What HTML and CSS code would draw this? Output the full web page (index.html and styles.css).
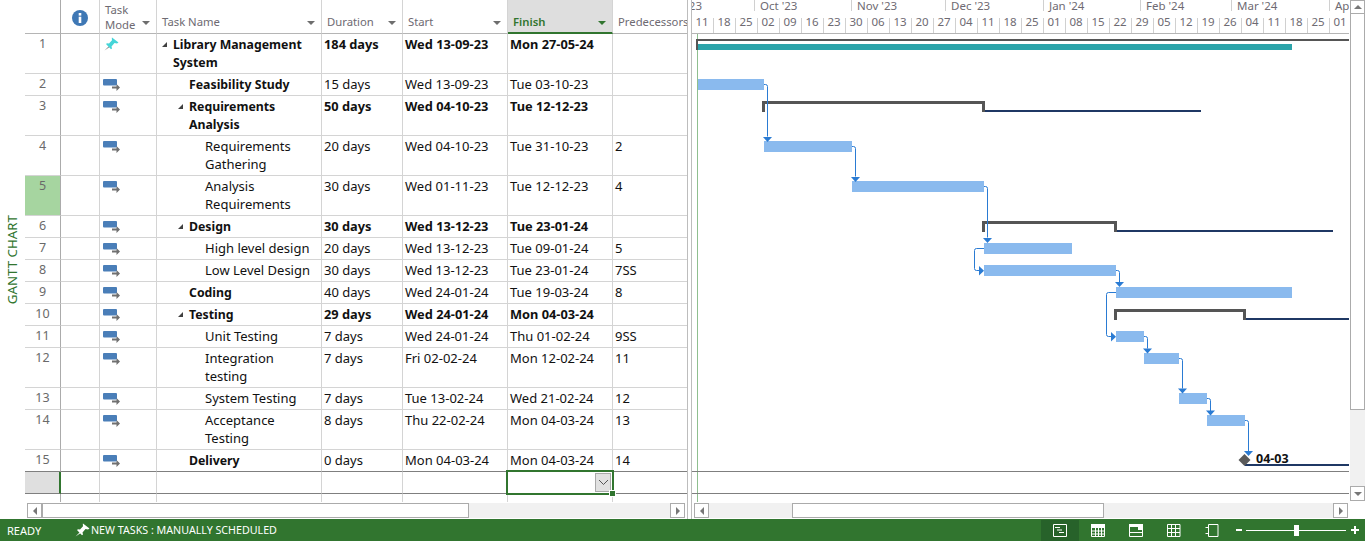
FILE: index.html
```html
<!DOCTYPE html>
<html>
<head>
	<meta charset="utf-8">
	<title>Library Management System - Gantt Chart</title>
	<link rel="stylesheet" href="styles.css">
</head>
<body>
<svg class="defs" width="0" height="0">
	<symbol id="auto" viewBox="0 0 17 12">
		<rect class="auto-bar" x="0" y="0" width="14" height="6.5" rx="1"/>
		<path class="auto-arrow" d="M9 7.5h4.500v-2.500l3.500 3.500-3.500 3.500v-2.500h-4.500z"/>
	</symbol>
	<symbol id="pin" viewBox="0 0 15 14">
		<path class="pin-needle" d="M0.500 13.500l5-5 1 1z"/>
		<path class="pin-head" d="M8 0.500l6.500 5-1.500 1-2.500-.5-3 3.500.5 2-1 .8-5-5.300 1-.8 2 .3 3-3.300-.2-2.200z"/>
	</symbol>
</svg>
<div class="views">
	<div class="sidebar"><span>GANTT CHART</span></div>
	<div class="pane-table">
		<table class="grid">
			<colgroup>
				<col class="c-id"><col class="c-info"><col class="c-mode"><col class="c-name"><col class="c-dur"><col class="c-date"><col class="c-date"><col class="c-pred">
			</colgroup>
			<tr class="head">
				<th></th>
				<th class="info-head">
					<svg width="16" height="16" viewBox="0 0 16 16"><circle class="info-disc" cx="8" cy="8" r="8"/><rect class="info-mark" x="6.700" y="3" width="2.600" height="2.600"/><rect class="info-mark" x="6.700" y="6.700" width="2.600" height="6.300"/></svg>
				</th>
				<th><div class="th-in th-two"><span>Task<br>Mode</span><i class="sort"></i></div></th>
				<th><div class="th-in"><span>Task Name</span><i class="sort"></i></div></th>
				<th><div class="th-in"><span>Duration</span><i class="sort"></i></div></th>
				<th><div class="th-in"><span>Start</span><i class="sort"></i></div></th>
				<th class="th-active"><div class="th-in"><span>Finish</span><i class="sort"></i></div></th>
				<th><div class="th-in"><span>Predecessors</span></div></th>
			</tr>
			<tr class="tall bold">
				<td class="id">1</td><td></td>
				<td><svg class="mode pin-icon"><use href="#pin"/></svg></td>
				<td class="name l0"><i class="twist"></i>Library Management System</td>
				<td>184 days</td><td>Wed 13-09-23</td><td>Mon 27-05-24</td><td></td>
			</tr>
			<tr class="bold-name">
				<td class="id">2</td><td></td>
				<td><svg class="mode"><use href="#auto"/></svg></td>
				<td class="name l1">Feasibility Study</td>
				<td>15 days</td><td>Wed 13-09-23</td><td>Tue 03-10-23</td><td></td>
			</tr>
			<tr class="tall bold">
				<td class="id">3</td><td></td>
				<td><svg class="mode"><use href="#auto"/></svg></td>
				<td class="name l1"><i class="twist"></i>Requirements Analysis</td>
				<td>50 days</td><td>Wed 04-10-23</td><td>Tue 12-12-23</td><td></td>
			</tr>
			<tr class="tall">
				<td class="id">4</td><td></td>
				<td><svg class="mode"><use href="#auto"/></svg></td>
				<td class="name l2">Requirements Gathering</td>
				<td>20 days</td><td>Wed 04-10-23</td><td>Tue 31-10-23</td><td>2</td>
			</tr>
			<tr class="tall">
				<td class="id id-on">5</td><td></td>
				<td><svg class="mode"><use href="#auto"/></svg></td>
				<td class="name l2">Analysis Requirements</td>
				<td>30 days</td><td>Wed 01-11-23</td><td>Tue 12-12-23</td><td>4</td>
			</tr>
			<tr class="bold">
				<td class="id">6</td><td></td>
				<td><svg class="mode"><use href="#auto"/></svg></td>
				<td class="name l1"><i class="twist"></i>Design</td>
				<td>30 days</td><td>Wed 13-12-23</td><td>Tue 23-01-24</td><td></td>
			</tr>
			<tr>
				<td class="id">7</td><td></td>
				<td><svg class="mode"><use href="#auto"/></svg></td>
				<td class="name l2">High level design</td>
				<td>20 days</td><td>Wed 13-12-23</td><td>Tue 09-01-24</td><td>5</td>
			</tr>
			<tr>
				<td class="id">8</td><td></td>
				<td><svg class="mode"><use href="#auto"/></svg></td>
				<td class="name l2">Low Level Design</td>
				<td>30 days</td><td>Wed 13-12-23</td><td>Tue 23-01-24</td><td>7SS</td>
			</tr>
			<tr class="bold-name">
				<td class="id">9</td><td></td>
				<td><svg class="mode"><use href="#auto"/></svg></td>
				<td class="name l1">Coding</td>
				<td>40 days</td><td>Wed 24-01-24</td><td>Tue 19-03-24</td><td>8</td>
			</tr>
			<tr class="bold">
				<td class="id">10</td><td></td>
				<td><svg class="mode"><use href="#auto"/></svg></td>
				<td class="name l1"><i class="twist"></i>Testing</td>
				<td>29 days</td><td>Wed 24-01-24</td><td>Mon 04-03-24</td><td></td>
			</tr>
			<tr>
				<td class="id">11</td><td></td>
				<td><svg class="mode"><use href="#auto"/></svg></td>
				<td class="name l2">Unit Testing</td>
				<td>7 days</td><td>Wed 24-01-24</td><td>Thu 01-02-24</td><td>9SS</td>
			</tr>
			<tr class="tall">
				<td class="id">12</td><td></td>
				<td><svg class="mode"><use href="#auto"/></svg></td>
				<td class="name l2">Integration testing</td>
				<td>7 days</td><td>Fri 02-02-24</td><td>Mon 12-02-24</td><td>11</td>
			</tr>
			<tr>
				<td class="id">13</td><td></td>
				<td><svg class="mode"><use href="#auto"/></svg></td>
				<td class="name l2">System Testing</td>
				<td>7 days</td><td>Tue 13-02-24</td><td>Wed 21-02-24</td><td>12</td>
			</tr>
			<tr class="tall">
				<td class="id">14</td><td></td>
				<td><svg class="mode"><use href="#auto"/></svg></td>
				<td class="name l2">Acceptance Testing</td>
				<td>8 days</td><td>Thu 22-02-24</td><td>Mon 04-03-24</td><td>13</td>
			</tr>
			<tr class="bold-name dark-line">
				<td class="id">15</td><td></td>
				<td><svg class="mode"><use href="#auto"/></svg></td>
				<td class="name l1">Delivery</td>
				<td>0 days</td><td>Mon 04-03-24</td><td>Mon 04-03-24</td><td>14</td>
			</tr>
			<tr class="dark-line blank">
				<td class="id id-blank"></td><td></td><td></td><td></td><td></td><td></td>
				<td class="selected">
					<div class="sel-box">
						<button class="sel-drop"><svg width="11" height="7" viewBox="0 0 11 7"><path class="chevron" d="M1 1l4.500 4.500 4.500-4.500"/></svg></button>
						<i class="sel-handle"></i>
					</div>
				</td>
				<td></td>
			</tr>
			<tr class="tail">
				<td></td><td></td><td></td><td></td><td></td><td></td><td></td><td></td>
			</tr>
		</table>
		<div class="hscroll">
			<button class="sb-btn"><i class="tri-left"></i></button>
			<div class="sb-thumb thumb-table"></div>
			<div class="sb-track"></div>
			<button class="sb-btn"><i class="tri-right"></i></button>
		</div>
	</div>
	<div class="splitter"></div>
	<div class="pane-chart">
		<svg class="chart" width="657" height="502" viewBox="692 0 657 502">
			<!-- timescale -->
			<g class="tick">
				<path d="M754.500 0v11M851.500 0v11M945.500 0v11M1043.500 0v11M1140.500 0v11M1231.500 0v11M1329.500 0v11"/>
				<path d="M713.500 18v15M735.500 18v15M757.500 18v15M779.500 18v15M801.500 18v15M823.500 18v15M845.500 18v15M867.500 18v15M889.500 18v15M911.500 18v15M933.500 18v15M955.500 18v15M977.500 18v15M999.500 18v15M1021.500 18v15M1043.500 18v15M1065.500 18v15M1087.500 18v15M1109.500 18v15M1131.500 18v15M1153.500 18v15M1175.500 18v15M1197.500 18v15M1219.500 18v15M1241.500 18v15M1263.500 18v15M1285.500 18v15M1307.500 18v15M1329.500 18v15"/>
			</g>
			<rect class="scale-line" x="692" y="33" width="657" height="1"/>
			<g class="month">
				<text x="702" y="10" text-anchor="end">Sep '23</text>
				<text x="760" y="10">Oct '23</text>
				<text x="857" y="10">Nov '23</text>
				<text x="951" y="10">Dec '23</text>
				<text x="1049" y="10">Jan '24</text>
				<text x="1146" y="10">Feb '24</text>
				<text x="1237" y="10">Mar '24</text>
				<text x="1335" y="10">Apr '24</text>
			</g>
			<g class="week">
				<text x="702" y="26">11</text><text x="724" y="26">18</text><text x="746" y="26">25</text>
				<text x="768" y="26">02</text><text x="790" y="26">09</text><text x="812" y="26">16</text><text x="834" y="26">23</text><text x="856" y="26">30</text>
				<text x="878" y="26">06</text><text x="900" y="26">13</text><text x="922" y="26">20</text><text x="944" y="26">27</text>
				<text x="966" y="26">04</text><text x="988" y="26">11</text><text x="1010" y="26">18</text><text x="1032" y="26">25</text>
				<text x="1054" y="26">01</text><text x="1076" y="26">08</text><text x="1098" y="26">15</text><text x="1120" y="26">22</text><text x="1142" y="26">29</text>
				<text x="1164" y="26">05</text><text x="1186" y="26">12</text><text x="1208" y="26">19</text><text x="1230" y="26">26</text>
				<text x="1252" y="26">04</text><text x="1274" y="26">11</text><text x="1296" y="26">18</text><text x="1318" y="26">25</text>
				<text x="1340" y="26">01</text>
			</g>

			<rect class="today" x="697" y="34" width="1" height="468"/>
			<rect class="row-rule" x="692" y="471" width="657" height="1"/>
			<rect class="row-rule" x="692" y="493" width="657" height="1"/>

			<!-- project summary -->
			<rect class="summary" x="696" y="39" width="653" height="2"/>
			<rect class="summary" x="696" y="39" width="2" height="11"/>
			<rect class="project" x="698" y="44" width="594" height="6"/>

			<!-- summaries -->
			<path class="summary" d="M762 101h223v11h-3v-8h-217v8h-3z"/>
			<rect class="rollup" x="985" y="110" width="216" height="2"/>
			<path class="summary" d="M982 221h135v11h-3v-8h-129v8h-3z"/>
			<rect class="rollup" x="1117" y="230" width="216" height="2"/>
			<path class="summary" d="M1114 309h132v11h-3v-8h-126v8h-3z"/>
			<rect class="rollup" x="1246" y="318" width="103" height="2"/>
			<rect class="rollup" x="1245" y="464" width="104" height="2"/>

			<!-- tasks -->
			<g class="task">
				<rect x="698" y="79" width="66" height="11"/>
				<rect x="764" y="141" width="88" height="11"/>
				<rect x="852" y="181" width="132" height="11"/>
				<rect x="984" y="243" width="88" height="11"/>
				<rect x="984" y="265" width="132" height="11"/>
				<rect x="1116" y="287" width="176" height="11"/>
				<rect x="1116" y="331" width="28" height="11"/>
				<rect x="1144" y="353" width="35" height="11"/>
				<rect x="1179" y="393" width="28" height="11"/>
				<rect x="1207" y="415" width="38" height="11"/>
			</g>

			<!-- links -->
			<g class="link">
				<path d="M764 84.500h1.500q2 0 2 2v50"/>
				<path d="M852 146.500h1.500q2 0 2 2v28"/>
				<path d="M984 186.500h1.500q2 0 2 2v49"/>
				<path d="M984 248.500h-7.500q-2 0-2 2v18q0 2 2 2h3"/>
				<path d="M1116 270.500h1.500q2 0 2 2v10"/>
				<path d="M1116 292.500h-7.500q-2 0-2 2v40q0 2 2 2h3"/>
				<path d="M1144 336.500h1.500q2 0 2 2v10"/>
				<path d="M1179 358.500h1.500q2 0 2 2v28"/>
				<path d="M1207 398.500h1.500q2 0 2 2v11"/>
				<path d="M1245 420.500h1.500q2 0 2 2v29"/>
			</g>
			<g class="head-arrow">
				<path d="M763 137h9l-4.500 5z"/>
				<path d="M851 177h9l-4.500 5z"/>
				<path d="M983 238h9l-4.500 5z"/>
				<path d="M979 266v9.500l5-4.750z"/>
				<path d="M1115 282h9l-4.500 5z"/>
				<path d="M1111 332v9.500l5-4.750z"/>
				<path d="M1143 348.500h9l-4.500 5z"/>
				<path d="M1178 388.500h9l-4.500 5z"/>
				<path d="M1206 410.500h9l-4.500 5z"/>
				<path d="M1244 451h9l-4.500 5z"/>
			</g>

			<path class="milestone" d="M1244.500 454l6 6-6 6-6-6z"/>
			<text class="date-label" x="1256" y="463">04-03</text>
		</svg>
		<div class="hscroll">
			<button class="sb-btn"><i class="tri-left"></i></button>
			<div class="sb-track track-chart"></div>
			<div class="sb-thumb thumb-chart"></div>
			<div class="sb-track"></div>
			<button class="sb-btn"><i class="tri-right"></i></button>
		</div>
	</div>
	<div class="vscroll">
		<button class="vs-btn vs-up"><i class="tri-up"></i></button>
		<div class="vs-thumb"></div>
		<div class="vs-track"></div>
		<button class="vs-btn vs-down"><i class="tri-down"></i></button>
	</div>
</div>
<footer class="status">
	<span class="ready">READY</span>
	<svg class="st-pin" width="15" height="14"><use href="#pin"/></svg>
	<span class="new-tasks">NEW TASKS : MANUALLY SCHEDULED</span>
	<div class="st-right">
		<div class="st-view st-view-on">
			<svg width="14" height="13" viewBox="0 0 14 13"><path class="st-line" d="M.5.500h13v12h-13zM2 3.500h5M4 6h5M6 8.500h5"/></svg>
		</div>
		<div class="st-view">
			<svg width="14" height="13" viewBox="0 0 14 13"><rect class="st-fill" width="14" height="4"/><path class="st-line" d="M.5 4v8.500h13v-8.500M4.500 4v8.500M7.500 4v8.500M10.500 4v8.500M.5 7h13M.5 10h13"/></svg>
		</div>
		<div class="st-view">
			<svg width="14" height="13" viewBox="0 0 14 13"><path class="st-line" d="M.5.500h13v12h-13zM.5 8.500h13"/><rect class="st-fill" width="14" height="3"/><rect class="st-fill" x="9" y="3" width="5" height="3"/></svg>
		</div>
		<div class="st-view">
			<svg width="14" height="13" viewBox="0 0 14 13"><path class="st-line" d="M.5.500h12.500v12h-12.500zM4.500.5v12M8.500.5v12M.5 4.500h12.500M.5 8.500h12.500"/></svg>
		</div>
		<div class="st-view">
			<svg width="14" height="13" viewBox="0 0 14 13"><path class="st-line" d="M3.500.500h9.500v12h-9.500zM3.500 3.500h-3M3.500 9.500h-3"/></svg>
		</div>
		<div class="zoom">
			<i class="z-minus"></i>
			<div class="z-slider"><i class="z-thumb"></i></div>
			<i class="z-plus"></i>
		</div>
	</div>
</footer>
</body>
</html>
```

FILE: styles.css
```css
html, body {
  margin: 0;
  padding: 0;
}

body {
  width: 1365px;
  height: 541px;
  overflow: hidden;
  background: #fff;
  font-family: "Noto Sans", "Open Sans", sans-serif;
  font-size: 13px;
  color: #111;
}

.defs {
  display: block;
  height: 0;
}

button {
  padding: 0;
  margin: 0;
  background: #fff;
}

/* || main layout */

.views {
  display: flex;
  height: 519px;
}

.sidebar {
  width: 25px;
  display: flex;
  align-items: center;
  justify-content: center;
}

.sidebar span {
  writing-mode: vertical-rl;
  transform: rotate(180deg);
  color: #31752f;
  font-size: 13.3px;
  margin-right: 1px;
}

.pane-table {
  width: 662px;
}

.splitter {
  width: 3px;
  border-left: 1px solid #bdbdbd;
  border-right: 1px solid #bdbdbd;
}

.pane-chart {
  width: 658px;
}

/* || task table */

.grid {
  table-layout: fixed;
  width: 662px;
  border-collapse: separate;
  border-spacing: 0;
}

.c-id { width: 36px; }
.c-info { width: 39px; }
.c-mode { width: 57px; }
.c-name { width: 165px; }
.c-dur { width: 81px; }
.c-date { width: 105px; }
.c-pred { width: 74px; }

.grid th, .grid td {
  box-sizing: border-box;
  padding: 0;
  border-right: 1px solid #d4d4d4;
  border-bottom: 1px solid #d4d4d4;
  vertical-align: top;
  text-align: left;
  font-weight: normal;
}

.grid td {
  height: 22px;
  padding: 1px 2px 0;
  line-height: 18px;
  white-space: nowrap;
  overflow: hidden;
}

.grid tr > :first-child {
  border-right-color: #ababab;
}

.grid tr > :last-child {
  border-right: 0;
}

.head th {
  height: 34px;
  overflow: hidden;
  border-bottom-color: #b5b5b5;
  color: #6e6a72;
  font-size: 11.3px;
  line-height: 15px;
  vertical-align: bottom;
}

.th-in {
  display: flex;
  justify-content: space-between;
  align-items: flex-end;
  padding: 0 6px 4px 5px;
}

.th-two span {
  margin-bottom: -3px;
}

.sort {
  width: 0;
  height: 0;
  margin-bottom: 4px;
  border-left: 4px solid transparent;
  border-right: 4px solid transparent;
  border-top: 4px solid #6e6e6e;
}

.grid .info-head {
  vertical-align: top;
}

.info-head svg {
  display: block;
  margin: 10px 0 0 11px;
}

.info-disc { fill: #3f78b5; }
.info-mark { fill: #fff; }

.grid .th-active {
  background: #dedede;
  border-bottom: 2px solid #31752f;
  color: #31752f;
  font-weight: 600;
}

.th-active .th-in {
  padding-bottom: 3px;
}

.th-active .sort {
  border-top-color: #31752f;
}

.grid .tall td {
  height: 40px;
  white-space: normal;
}

.grid .bold td {
  font-size: 12.8px;
  font-weight: 700;
}

.grid .bold .name, .grid .bold-name .name {
  padding-top: 2px;
  font-size: 12.3px;
  font-weight: 700;
}

.grid td.id {
  padding: 0;
  line-height: 19px;
  text-align: center;
  font-size: 12.5px;
  color: #6a6a6a;
  font-weight: normal;
}

.grid .id-on {
  background: #a6d5a0;
}

.grid tr .id-blank {
  background: #dfdfdf;
  border-right: 2px solid #31752f;
}

.name {
  position: relative;
}

.grid .l0 { padding-left: 16px; padding-right: 6px; }
.grid .l1 { padding-left: 32px; padding-right: 6px; }
.grid .l2 { padding-left: 48px; padding-right: 8px; }

.twist {
  position: absolute;
  top: 8px;
  margin-left: -11px;
  width: 0;
  height: 0;
  border-left: 5px solid transparent;
  border-bottom: 5px solid #404040;
}

.mode {
  display: block;
  width: 17px;
  height: 12px;
  margin: 4px 0 0 1px;
}

.grid .pin-icon {
  width: 15px;
  height: 14px;
  margin-top: 2px;
  margin-left: 2px;
}

.auto-bar { fill: #4a7eb8; }
.auto-arrow { fill: #707070; }
.pin-head { fill: var(--pin-head, #45d5d8); }
.pin-needle { fill: var(--pin-needle, #8a8a8a); }

.grid .dark-line td {
  border-bottom-color: #7f7f7f;
}

.grid .tail td {
  height: 8px;
  padding: 0;
  border-bottom: 0;
}

.grid td.selected {
  position: relative;
  overflow: visible;
}

.sel-box {
  position: absolute;
  left: -2px;
  top: -2px;
  right: -2px;
  bottom: -2px;
  border: 2px solid #31752f;
  box-sizing: border-box;
}

.sel-drop {
  position: absolute;
  top: 1px;
  right: 1px;
  width: 16px;
  height: 19px;
  background: #e1e1e1;
  border: 1px solid #a9a9a9;
  display: flex;
  align-items: center;
  justify-content: center;
}

.chevron {
  fill: none;
  stroke: #555;
  stroke-width: 1;
}

.sel-handle {
  position: absolute;
  right: -4px;
  bottom: -4px;
  width: 5px;
  height: 5px;
  background: #31752f;
  border: 1px solid #fff;
}

/* || scrollbars */

.hscroll {
  display: flex;
  height: 15px;
  margin-top: 1px;
  padding: 0 2px;
}

.sb-track {
  flex: 1;
  background: #f1f1f1;
}

.track-chart {
  flex: 0 0 83px;
}

.sb-btn, .sb-thumb {
  box-sizing: border-box;
  height: 15px;
  border: 1px solid #ababab;
  background: #fff;
}

.sb-btn {
  width: 15px;
  display: flex;
  align-items: center;
  justify-content: center;
}

.thumb-table { width: 427px; }
.thumb-chart { width: 312px; }

.tri-left, .tri-right, .tri-up, .tri-down {
  width: 0;
  height: 0;
  border: 4px solid transparent;
}

.tri-left { border-right: 4px solid #777; border-left: 0; }
.tri-right { border-left: 4px solid #777; border-right: 0; }
.tri-up { border-bottom: 4px solid #777; border-top: 0; }
.tri-down { border-top: 4px solid #777; border-bottom: 0; }

.vscroll {
  width: 15px;
  height: 501px;
  display: flex;
  flex-direction: column;
}

.vs-btn {
  box-sizing: border-box;
  width: 15px;
  display: flex;
  align-items: center;
  justify-content: center;
  border: 1px solid #ababab;
}

.vs-up { height: 14px; }
.vs-down { height: 15px; }

.vs-thumb {
  box-sizing: border-box;
  height: 396px;
  background: #fff;
  border-left: 1px solid #ababab;
  border-bottom: 1px solid #ababab;
  border-right: 1px solid #ababab;
}

.vs-track {
  flex: 1;
  background: #f1f1f1;
}

/* || chart */

.chart {
  display: block;
}

.tick path {
  fill: none;
  stroke: #d0d0d0;
}

.scale-line { fill: #b5b5b5; }

.month text, .week text {
  font-size: 11.5px;
  fill: #6e6a72;
}

.week text {
  text-anchor: middle;
}

.today { fill: #8fbf8f; }
.row-rule { fill: #7f7f7f; }
.summary { fill: #555; }
.project { fill: #2ca4aa; }
.rollup { fill: #1f3864; }
.task rect { fill: #8abaee; }

.link path {
  fill: none;
  stroke: #2a7bd3;
  stroke-width: 1;
}

.head-arrow path { fill: #2a7bd3; }
.milestone { fill: #5a5a5a; }

.date-label {
  font-size: 12.5px;
  font-weight: 700;
  fill: #111;
}

/* || status bar */

.status {
  display: flex;
  align-items: center;
  height: 22px;
  background: #31752f;
  color: #fff;
  font-size: 11px;
}

.ready {
  margin-left: 7px;
  width: 68px;
}

.new-tasks {
  font-size: 10.7px;
}

.st-pin {
  --pin-head: #fff;
  --pin-needle: #fff;
  margin-right: 1px;
}

.st-right {
  display: flex;
  align-items: center;
  margin-left: auto;
  height: 100%;
}

.st-view {
  width: 38px;
  height: 21px;
  margin-top: 1px;
  display: flex;
  align-items: center;
  justify-content: center;
}

.st-view-on {
  background: #27622a;
}

.st-line {
  fill: none;
  stroke: #fff;
  stroke-width: 1;
}

.st-fill { fill: #fff; }

.zoom {
  display: flex;
  align-items: center;
  width: 134px;
  padding-left: 5px;
  box-sizing: border-box;
}

.z-minus {
  width: 6px;
  height: 2px;
  background: #fff;
}

.z-slider {
  position: relative;
  width: 100px;
  height: 1px;
  margin: 0 4px;
  background: #fff;
}

.z-thumb {
  position: absolute;
  left: 48px;
  top: -5px;
  width: 5px;
  height: 11px;
  background: #fff;
}

.z-plus {
  position: relative;
  width: 8px;
  height: 2px;
  margin-left: 1px;
  background: #fff;
}

.z-plus::after {
  content: "";
  position: absolute;
  left: 3px;
  top: -3px;
  width: 2px;
  height: 8px;
  background: #fff;
}
```
